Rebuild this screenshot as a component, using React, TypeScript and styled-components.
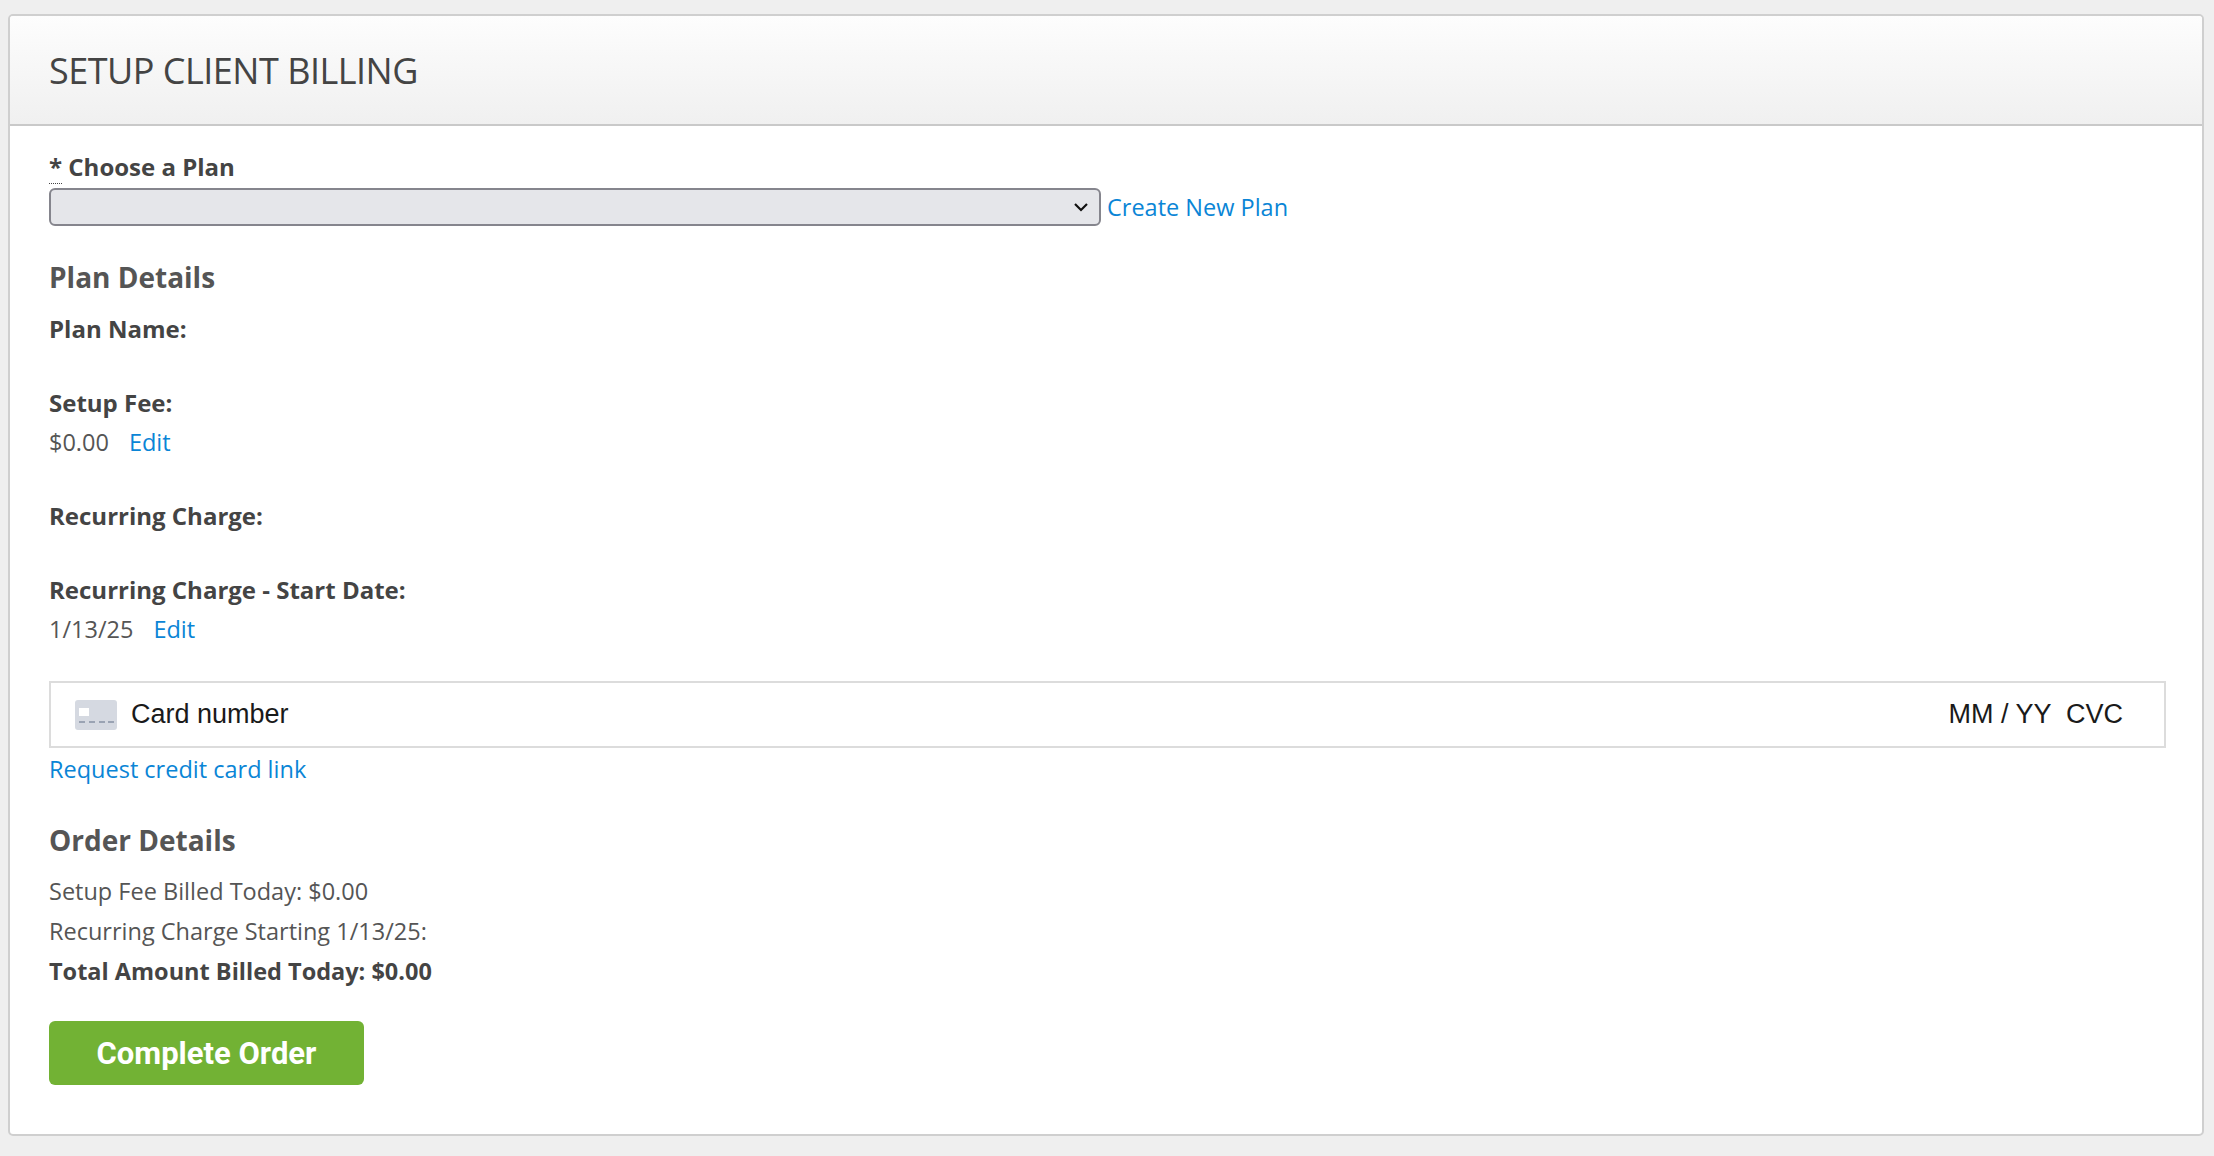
import React from "react";
import styled, { createGlobalStyle } from "styled-components";

const GlobalStyle = createGlobalStyle`
  body {
    margin: 0;
    background: #efefef;
    font-family: "Open Sans", "Liberation Sans", sans-serif;
  }
`;

const Page = styled.div`
  padding: 14px 10px 22px 8px;
`;

const Panel = styled.div`
  background: #fff;
  border: 2px solid #cfcfcf;
  border-radius: 5px;
  overflow: hidden;
`;

const Header = styled.div`
  height: 108px;
  display: flex;
  align-items: center;
  padding-left: 39px;
  background: linear-gradient(#fdfdfd, #f0f0f0);
  border-bottom: 2px solid #c9c9c9;
`;

const Title = styled.h1`
  margin: 0;
  font-size: 36px;
  font-weight: 400;
  color: #444;
  letter-spacing: -0.5px;
`;

const Body = styled.div`
  padding: 26px 36px 49px 39px;
  color: #555;
  font-size: 23.5px;
`;

const Label = styled.div`
  font-weight: 700;
  color: #444;
  line-height: 30px;
  font-size: 24px;
`;

const Required = styled.span`
  border-bottom: 1px dotted #444;
`;

const PlanRow = styled.div`
  display: flex;
  align-items: center;
  gap: 6px;
  margin-top: 6px;
`;

const Select = styled.div`
  width: 1052px;
  height: 38px;
  box-sizing: border-box;
  background: #e5e6ea;
  border: 2px solid #85858d;
  border-radius: 6px;
  display: flex;
  align-items: center;
  justify-content: flex-end;
  padding-right: 10px;
`;

const Link = styled.a`
  color: #0a85d6;
  text-decoration: none;
  line-height: 30px;
  cursor: pointer;
`;

const Heading = styled.h2<{ $top: number }>`
  margin: ${(p) => p.$top}px 0 0;
  font-size: 28px;
  line-height: 36px;
  font-weight: 700;
  color: #555;
`;

const Fields = styled.div`
  display: flex;
  flex-direction: column;
  gap: 44px;
  margin-top: 19px;
`;

const Value = styled.div`
  margin-top: 9px;
  line-height: 30px;
  display: flex;
  gap: 20px;
`;

const CardBox = styled.div`
  margin-top: 37px;
  height: 67px;
  box-sizing: border-box;
  border: 2px solid #dcdcdc;
  display: flex;
  align-items: center;
  padding: 0 41px 0 24px;
  font-family: "Liberation Sans", Arial, sans-serif;
  font-size: 27px;
  color: #1a1a1a;
  gap: 14px;
`;

const CardRight = styled.div`
  margin-left: auto;
  white-space: pre;
`;

const RequestLink = styled(Link)`
  display: block;
  margin-top: 6px;
`;

const Lines = styled.div`
  margin-top: 13px;
  line-height: 40px;
`;

const Bold = styled.div`
  font-weight: 700;
  color: #444;
`;

const Button = styled.button`
  margin-top: 30px;
  width: 315px;
  height: 64px;
  border: none;
  border-radius: 6px;
  background: #72b234;
  color: #fff;
  font-family: Roboto, "Liberation Sans", sans-serif;
  font-size: 31px;
  font-weight: 700;
  cursor: pointer;
`;

const CardIcon = () => (
  <svg width="42" height="30" viewBox="0 0 42 30">
    <rect x="0" y="0" width="42" height="30" rx="3" fill="#d5d9e1" />
    <rect x="4" y="8" width="10" height="8" fill="#fff" />
    {[4, 14, 24, 33].map((x) => (
      <rect key={x} x={x} y="21" width="6" height="2" fill="#9aa3b3" />
    ))}
  </svg>
);

export default function App() {
  return (
    <Page>
      <GlobalStyle />
      <Panel>
        <Header>
          <Title>SETUP CLIENT BILLING</Title>
        </Header>
        <Body>
          <Label>
            <Required>*</Required> Choose a Plan
          </Label>
          <PlanRow>
            <Select>
              <svg width="16" height="10" viewBox="0 0 16 10">
                <path d="M2 2l6 6 6-6" stroke="#111" strokeWidth="2.2" fill="none" />
              </svg>
            </Select>
            <Link>Create New Plan</Link>
          </PlanRow>

          <Heading $top={33}>Plan Details</Heading>
          <Fields>
            <Label>Plan Name:</Label>
            <div>
              <Label>Setup Fee:</Label>
              <Value>
                $0.00 <Link>Edit</Link>
              </Value>
            </div>
            <Label>Recurring Charge:</Label>
            <div>
              <Label>Recurring Charge - Start Date:</Label>
              <Value>
                1/13/25 <Link>Edit</Link>
              </Value>
            </div>
          </Fields>

          <CardBox>
            <CardIcon />
            <span>Card number</span>
            <CardRight>MM / YY  CVC</CardRight>
          </CardBox>
          <RequestLink>Request credit card link</RequestLink>

          <Heading $top={38}>Order Details</Heading>
          <Lines>
            <div>Setup Fee Billed Today: $0.00</div>
            <div>Recurring Charge Starting 1/13/25:</div>
            <Bold>Total Amount Billed Today: $0.00</Bold>
          </Lines>
          <Button>Complete Order</Button>
        </Body>
      </Panel>
    </Page>
  );
}
